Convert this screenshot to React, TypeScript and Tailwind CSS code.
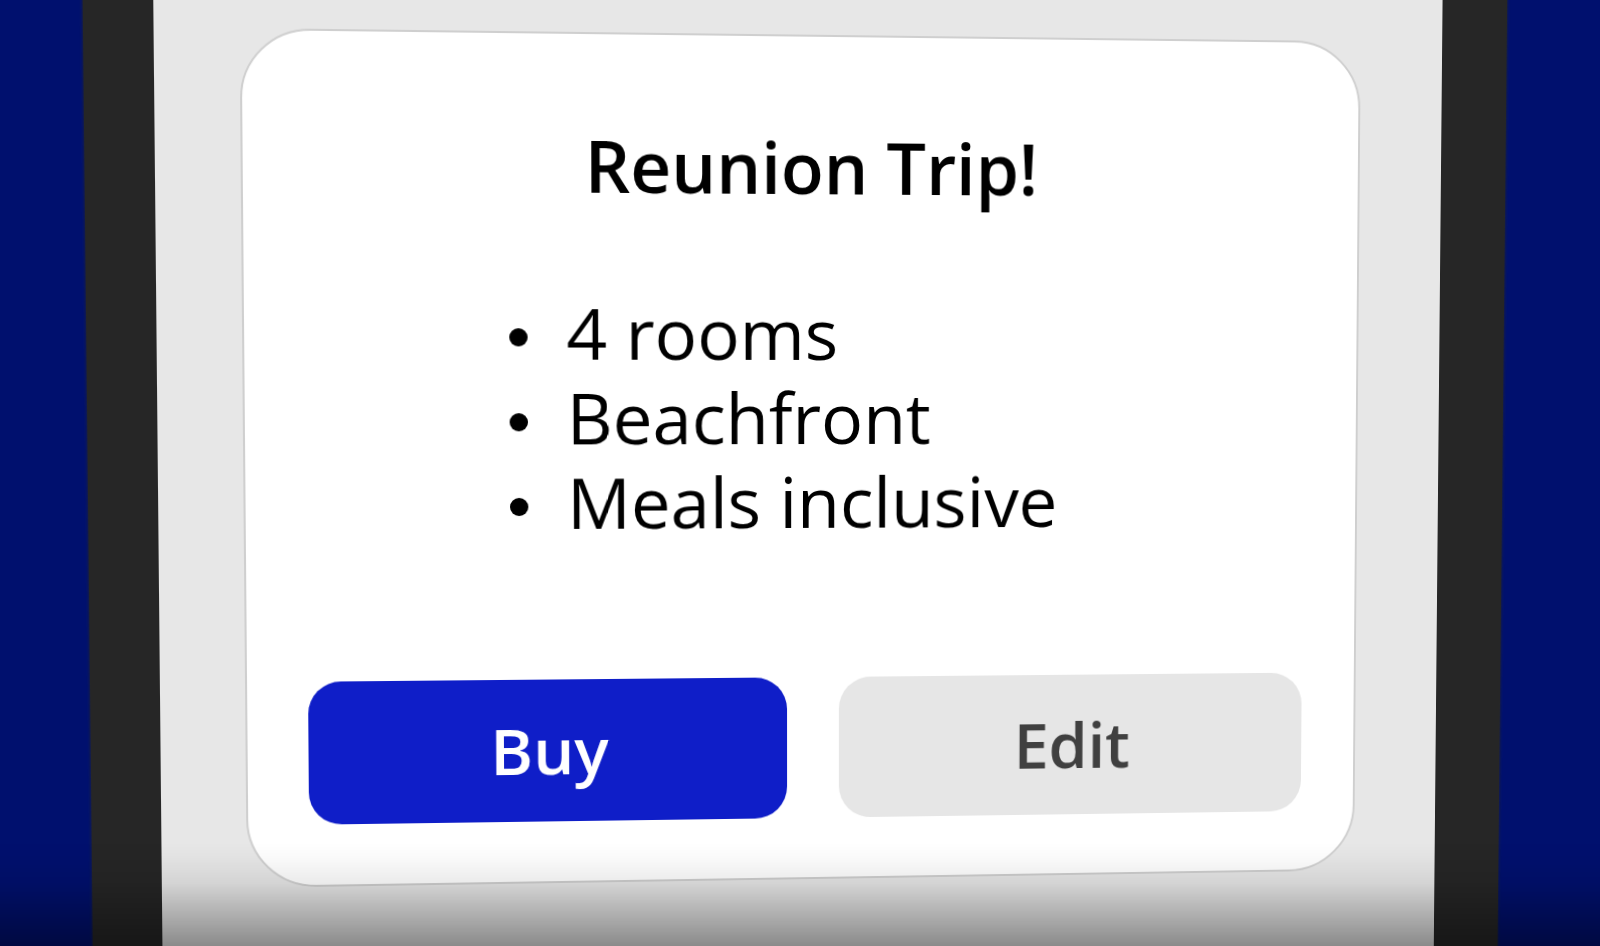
import React from 'react';

const perks = ['4 rooms', 'Beachfront', 'Meals inclusive'];

const OfferCard: React.FC<{ title: string; items: string[] }> = ({ title, items }) => {
  return (
    <article className="flex flex-col rounded-[68px] border-2 border-[#cfcfcf] bg-white pt-[87px] pr-[54px] pb-[60px] pl-[59px]">
      <h1 className="text-center text-[70px] leading-[84px] font-semibold text-black">{title}</h1>

      <ul className="mt-[81px] ml-[198px] text-[70px] leading-[84px] text-black">
        {items.map((item) => (
          <li key={item} className="flex items-center">
            <span className="mt-2.5 mr-[38px] size-[18px] shrink-0 rounded-full bg-black" />
            {item}
          </li>
        ))}
      </ul>

      <div className="mt-[135px] grid grid-cols-2 gap-[52px] text-[64px] leading-[84px] font-semibold">
        <button type="button" className="h-[142px] rounded-[32px] bg-[#0f1ec8] text-white">
          Buy
        </button>
        <button type="button" className="h-[142px] rounded-[32px] bg-[#e6e6e6] text-[#404040]">
          Edit
        </button>
      </div>
    </article>
  );
};

export default function App() {
  return (
    <main className="relative flex h-screen overflow-hidden bg-[#00106e] pr-[82px] pl-[105px] font-['Open_Sans','Noto_Sans',sans-serif] perspective-[1060px] [perspective-origin:53%_42%]">
      {/* Phone, tilted slightly away on the right */}
      <div className="-my-12 flex-1 border-x-[67px] border-[#262626] bg-[#e7e7e7] pt-[85px] pr-[84px] pl-[82px] shadow-[0_0_3px_#262626] [transform:rotateY(2deg)_rotateX(-0.9deg)]">
        <OfferCard title="Reunion Trip!" items={perks} />
      </div>

      {/* Bottom fade */}
      <div className="pointer-events-none absolute inset-x-0 bottom-0 h-26 bg-[linear-gradient(to_bottom,rgba(0,0,0,0)_0%,rgba(0,0,0,0.02)_15%,rgba(0,0,0,0.08)_39%,rgba(0,0,0,0.18)_58%,rgba(0,0,0,0.4)_100%)]" />
    </main>
  );
}
